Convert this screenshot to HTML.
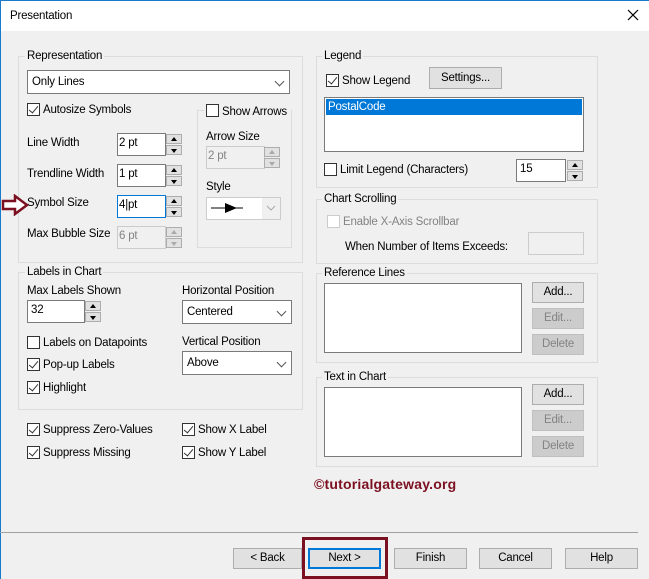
<!DOCTYPE html>
<html><head><meta charset="utf-8"><style>
*{box-sizing:border-box;margin:0;padding:0}
body{width:649px;height:579px;overflow:hidden;background:#f0f0f0;font-family:"Liberation Sans",sans-serif;font-size:11.5px;letter-spacing:-0.2px;color:#000;position:relative}
.a{position:absolute}
.t{position:absolute;white-space:nowrap;line-height:14px}
.title{left:0;top:0;width:649px;height:31px;background:#fff;border-top:1px solid #1979ca;border-left:1px solid #1979ca}
.lb{position:absolute;left:0;top:0;width:1px;height:579px;background:#1979ca}
.grp{position:absolute;border:1px solid #dcdcdc}
.gl{position:absolute;background:#f0f0f0;padding:0 2px;line-height:14px;white-space:nowrap}
.box{position:absolute;background:#fff;border:1px solid #7a7a7a}
.cb{position:absolute;width:13px;height:13px;border:1px solid #333;background:#fff}
.cb.c::after{content:"";position:absolute;left:3px;top:0px;width:4px;height:8px;border:solid #333;border-width:0 1.5px 1.5px 0;transform:rotate(40deg)}
.cb.d{border-color:#ccc}
.btn{position:absolute;background:#e1e1e1;border:1px solid #adadad;text-align:center;line-height:18px}
.btn.dis{background:#ccc;border-color:#bfbfbf;color:#838383}
.spin{position:absolute;width:16px}
.spin div{position:absolute;left:0;width:16px;height:10px;border:1px solid #adadad;background:#e1e1e1}
.spin div::after{content:"";position:absolute;left:4px;border-left:3px solid transparent;border-right:3px solid transparent}
.spin .u{top:0}.spin .u::after{top:2px;border-bottom:4px solid #000}
.spin .dn{top:11px}.spin .dn::after{top:3px;border-top:4px solid #000}
.spin.g .u::after{border-bottom-color:#aaa}.spin.g .dn::after{border-top-color:#aaa}
.dd{position:absolute;background:#fff;border:1px solid #7a7a7a;line-height:22px;padding-left:4px}
.dd::after{content:"";position:absolute;right:6px;top:7px;width:6px;height:6px;border:solid #555;border-width:0 1px 1px 0;transform:rotate(45deg)}
.gray{color:#838383}
</style></head><body>
<div class="a title"></div><div class="lb"></div>
<div class="t" style="left:10px;top:9px">Presentation</div>
<svg class="a" style="left:627px;top:9px" width="12" height="12"><path d="M1 1L11 11M11 1L1 11" stroke="#000" stroke-width="1.2"/></svg>

<div class="grp" style="left:18px;top:56px;width:285px;height:207px"></div>
<div class="gl" style="left:25px;top:49px">Representation</div>
<div class="dd" style="left:27px;top:70px;width:263px;height:24px">Only Lines</div>
<div class="cb c" style="left:27px;top:103px"></div><div class="t" style="left:43px;top:103px">Autosize Symbols</div>
<div class="grp" style="left:197px;top:110px;width:95px;height:138px"></div>
<div class="gl" style="left:204px;top:104px;padding-right:4px"><span class="cb" style="position:relative;display:inline-block;vertical-align:-2px;margin-right:3px"></span>Show Arrows</div>
<div class="t" style="left:27px;top:136px">Line Width</div>
<div class="box" style="left:117px;top:133px;width:49px;height:23px;padding:3px 1px">2 pt</div><div class="spin" style="left:166px;top:134px"><div class="u"></div><div class="dn"></div></div>
<div class="t" style="left:27px;top:167px">Trendline Width</div>
<div class="box" style="left:117px;top:164px;width:49px;height:23px;padding:3px 1px">1 pt</div><div class="spin" style="left:166px;top:165px"><div class="u"></div><div class="dn"></div></div>
<div class="t" style="left:27px;top:196px">Symbol Size</div>
<div class="box" style="left:117px;top:195px;width:49px;height:23px;padding:3px 1px;border-color:#0078d7">4|pt</div><div class="spin" style="left:166px;top:196px"><div class="u"></div><div class="dn"></div></div>
<div class="t" style="left:27px;top:227px">Max Bubble Size</div>
<div class="box gray" style="left:117px;top:226px;width:49px;height:23px;padding:3px 1px;background:#f0f0f0;border-color:#ccc">6 pt</div><div class="spin g" style="left:166px;top:227px"><div class="u"></div><div class="dn"></div></div>
<div class="t" style="left:206px;top:130px">Arrow Size</div>
<div class="box gray" style="left:206px;top:146px;width:59px;height:23px;padding:3px 1px;background:#f0f0f0;border-color:#ccc">2 pt</div><div class="spin g" style="left:264px;top:147px"><div class="u"></div><div class="dn"></div></div>
<div class="t" style="left:206px;top:180px">Style</div>
<div class="box" style="left:206px;top:197px;width:75px;height:23px;background:#f0f0f0;border-color:#ccc"></div>
<div class="a" style="left:207px;top:198px;width:55px;height:21px;background:#fff"></div>
<svg class="a" style="left:210px;top:201px" width="70" height="16"><path d="M1 7H33" stroke="#000"/><path d="M15 2L27 7L15 12Z" fill="#000"/><path d="M57 5L61 9L65 5" stroke="#aaa" fill="none"/></svg>
<svg class="a" style="left:1px;top:194px" width="28" height="22"><path d="M2 7H14V2L26 11L14 20V15H2Z" fill="#fff" stroke="#7b1020" stroke-width="2.5"/></svg>

<div class="grp" style="left:18px;top:272px;width:285px;height:138px"></div>
<div class="gl" style="left:25px;top:265px">Labels in Chart</div>
<div class="t" style="left:27px;top:284px">Max Labels Shown</div>
<div class="box" style="left:27px;top:300px;width:58px;height:23px;padding:3px 3px">32</div><div class="spin" style="left:85px;top:301px"><div class="u"></div><div class="dn"></div></div>
<div class="t" style="left:182px;top:284px">Horizontal Position</div>
<div class="dd" style="left:182px;top:300px;width:110px;height:24px">Centered</div>
<div class="cb" style="left:27px;top:336px"></div><div class="t" style="left:43px;top:336px">Labels on Datapoints</div>
<div class="cb c" style="left:27px;top:358px"></div><div class="t" style="left:43px;top:358px">Pop-up Labels</div>
<div class="cb c" style="left:27px;top:381px"></div><div class="t" style="left:43px;top:381px">Highlight</div>
<div class="t" style="left:182px;top:335px">Vertical Position</div>
<div class="dd" style="left:182px;top:351px;width:110px;height:24px">Above</div>
<div class="cb c" style="left:27px;top:423px"></div><div class="t" style="left:43px;top:423px">Suppress Zero-Values</div>
<div class="cb c" style="left:27px;top:446px"></div><div class="t" style="left:43px;top:446px">Suppress Missing</div>
<div class="cb c" style="left:182px;top:423px"></div><div class="t" style="left:198px;top:423px">Show X Label</div>
<div class="cb c" style="left:182px;top:446px"></div><div class="t" style="left:198px;top:446px">Show Y Label</div>

<div class="grp" style="left:316px;top:56px;width:282px;height:132px"></div>
<div class="gl" style="left:322px;top:49px">Legend</div>
<div class="cb c" style="left:326px;top:74px"></div><div class="t" style="left:342px;top:74px">Show Legend</div>
<div class="btn" style="left:429px;top:67px;width:73px;height:22px;line-height:20px">Settings...</div>
<div class="box" style="left:324px;top:97px;width:260px;height:55px"></div>
<div class="a" style="left:326px;top:99px;width:256px;height:16px;background:#0078d7;color:#fff;padding-left:2px;line-height:16px">PostalCode</div>
<div class="cb" style="left:324px;top:163px"></div><div class="t" style="left:340px;top:163px">Limit Legend (Characters)</div>
<div class="box" style="left:516px;top:159px;width:50px;height:23px;padding:3px 3px">15</div><div class="spin" style="left:567px;top:160px"><div class="u"></div><div class="dn"></div></div>

<div class="grp" style="left:316px;top:199px;width:282px;height:65px"></div>
<div class="gl" style="left:322px;top:192px">Chart Scrolling</div>
<div class="cb d" style="left:327px;top:215px"></div><div class="t gray" style="left:343px;top:215px">Enable X-Axis Scrollbar</div>
<div class="t" style="left:345px;top:240px">When Number of Items Exceeds:</div>
<div class="box" style="left:528px;top:232px;width:56px;height:23px;background:#f0f0f0;border-color:#ccc"></div>

<div class="grp" style="left:316px;top:273px;width:282px;height:90px"></div>
<div class="gl" style="left:322px;top:266px">Reference Lines</div>
<div class="box" style="left:324px;top:283px;width:198px;height:70px"></div>
<div class="btn" style="left:532px;top:282px;width:52px;height:21px">Add...</div>
<div class="btn dis" style="left:532px;top:308px;width:52px;height:21px">Edit...</div>
<div class="btn dis" style="left:532px;top:334px;width:52px;height:21px">Delete</div>

<div class="grp" style="left:316px;top:377px;width:282px;height:90px"></div>
<div class="gl" style="left:322px;top:370px">Text in Chart</div>
<div class="box" style="left:324px;top:387px;width:198px;height:70px"></div>
<div class="btn" style="left:532px;top:384px;width:52px;height:21px">Add...</div>
<div class="btn dis" style="left:532px;top:410px;width:52px;height:21px">Edit...</div>
<div class="btn dis" style="left:532px;top:436px;width:52px;height:21px">Delete</div>

<div class="t" style="left:314px;top:477px;font-weight:bold;font-size:14px;color:#7b1020;letter-spacing:0.2px">©tutorialgateway.org</div>

<div class="a" style="left:0;top:532px;width:638px;height:1px;background:#a0a0a0"></div>
<div class="btn" style="left:233px;top:548px;width:69px;height:21px">&lt; Back</div>
<div class="btn" style="left:308px;top:548px;width:73px;height:21px;border:2px solid #0078d7;line-height:17px">Next &gt;</div>
<div class="btn" style="left:394px;top:548px;width:73px;height:21px">Finish</div>
<div class="btn" style="left:479px;top:548px;width:73px;height:21px">Cancel</div>
<div class="btn" style="left:565px;top:548px;width:73px;height:21px">Help</div>
<div class="a" style="left:302px;top:537px;width:86px;height:42px;border:3px solid #7b1020"></div>
</body></html>
